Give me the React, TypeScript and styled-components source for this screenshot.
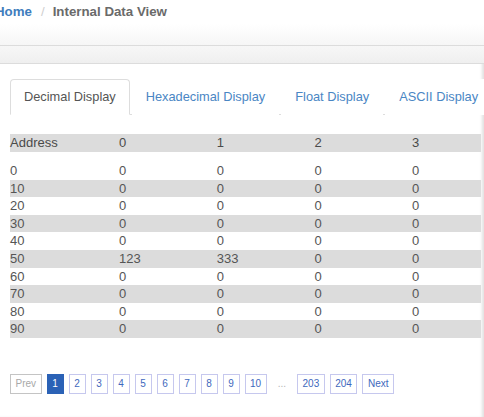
import React from "react";
import styled, { createGlobalStyle } from "styled-components";

const Global = createGlobalStyle`
  html, body { margin: 0; padding: 0; background: #fff; }
  body { font-family: "Liberation Sans", Arial, sans-serif; overflow: hidden; }
  * { box-sizing: border-box; }
`;

const Page = styled.div`
  width: 484px;
  height: 417px;
  overflow: hidden;
  box-shadow: inset -3px 0 3px -1px rgba(0, 0, 0, 0.12);
`;

const Header = styled.div`
  height: 46px;
  background: linear-gradient(#fff 0, #fff 24px, #f6f6f6 45px);
  border-bottom: 1px solid #dcdcdc;
`;

const Breadcrumb = styled.div`
  margin-left: -5px;
  font-size: 13.3px;
  font-weight: bold;
  line-height: 24px;
  color: #6a6a6a;
  white-space: nowrap;
`;

const Crumb = styled.span<{ $link?: boolean }>`
  color: ${(p) => (p.$link ? "#3f7dbd" : "#6a6a6a")};
`;

const Sep = styled.span`
  color: #cfcfcf;
  font-weight: normal;
  margin: 0 8px 0 9px;
`;

const Band = styled.div`
  height: 18px;
  background: linear-gradient(#f7f7f7, #efefef);
  border-bottom: 1px solid #dcdcdc;
`;

const Content = styled.div`
  padding: 15px 3px 0 10px;
`;

const Tabs = styled.div`
  display: flex;
  border-bottom: 1px solid #ddd;
  white-space: nowrap;
`;

const Tab = styled.div<{ $active?: boolean }>`
  flex: none;
  margin-right: 2px;
  margin-bottom: -1px;
  padding: 8px 13px;
  line-height: 18px;
  font-size: 12.8px;
  border: 1px solid ${(p) => (p.$active ? "#ddd" : "transparent")};
  border-bottom-color: ${(p) => (p.$active ? "#fff" : "transparent")};
  border-radius: 4px 4px 0 0;
  background: #fff;
  color: ${(p) => (p.$active ? "#555" : "#4a86c4")};
`;

const Grid = styled.div`
  display: grid;
  grid-template-columns: 109px repeat(3, 97.7px) 1fr;
  margin-top: 19px;
  font-size: 13px;
  color: #555;
`;

const HeadRow = styled.div`
  display: contents;
  & > div {
    background: #dcdcdc;
    height: 18px;
    line-height: 18px;
    color: #4a4a4a;
    margin-bottom: 10px;
  }
`;

const Row = styled.div<{ $shade?: boolean }>`
  display: contents;
  & > div {
    background: ${(p) => (p.$shade ? "#dcdcdc" : "transparent")};
    height: 17.6px;
    line-height: 17.6px;
  }
`;

const Cell = styled.div`
  white-space: nowrap;
`;

const Pager = styled.div`
  display: flex;
  align-items: center;
  gap: 5px;
  margin-top: 36px;
`;

const PageBtn = styled.div<{ $active?: boolean; $muted?: boolean }>`
  flex: none;
  min-width: 17px;
  height: 20px;
  line-height: 18px;
  padding: 0 4.5px;
  font-size: 10px;
  border: 1px solid
    ${(p) => (p.$active ? "#2b62b6" : p.$muted ? "#c4c4c4" : "#c6c8ee")};
  background: ${(p) => (p.$active ? "#2b62b6" : "#fff")};
  color: ${(p) => (p.$active ? "#fff" : p.$muted ? "#a8a8a8" : "#3e68bd")};
  text-align: center;
`;

const Ellipsis = styled.div`
  padding: 0 6px;
  font-size: 10px;
  color: #b5b5b5;
`;

const data: number[][] = Array.from({ length: 10 }, (_, r) =>
  Array.from({ length: 4 }, (_, c) => {
    if (r === 5 && c === 0) return 123;
    if (r === 5 && c === 1) return 333;
    return 0;
  })
);

const cols = [0, 1, 2, 3];
const pages = ["1", "2", "3", "4", "5", "6", "7", "8", "9", "10"];

export default function App() {
  return (
    <>
      <Global />
      <Page>
        <Header>
          <Breadcrumb>
            <Crumb $link>Home</Crumb>
            <Sep>/</Sep>
            <Crumb>Internal Data View</Crumb>
          </Breadcrumb>
        </Header>
        <Band />
        <Content>
          <Tabs>
            <Tab $active>Decimal Display</Tab>
            <Tab>Hexadecimal Display</Tab>
            <Tab>Float Display</Tab>
            <Tab>ASCII Display</Tab>
          </Tabs>
          <Grid>
            <HeadRow>
              <Cell>Address</Cell>
              {cols.map((c) => (
                <Cell key={c}>{c}</Cell>
              ))}
            </HeadRow>
            {data.map((row, r) => (
              <Row key={r} $shade={r % 2 === 1}>
                <Cell>{r * 10}</Cell>
                {row.map((v, c) => (
                  <Cell key={c}>{v}</Cell>
                ))}
              </Row>
            ))}
          </Grid>
          <Pager>
            <PageBtn $muted>Prev</PageBtn>
            {pages.map((p) => (
              <PageBtn key={p} $active={p === "1"}>
                {p}
              </PageBtn>
            ))}
            <Ellipsis>...</Ellipsis>
            <PageBtn>203</PageBtn>
            <PageBtn>204</PageBtn>
            <PageBtn>Next</PageBtn>
          </Pager>
        </Content>
      </Page>
    </>
  );
}
